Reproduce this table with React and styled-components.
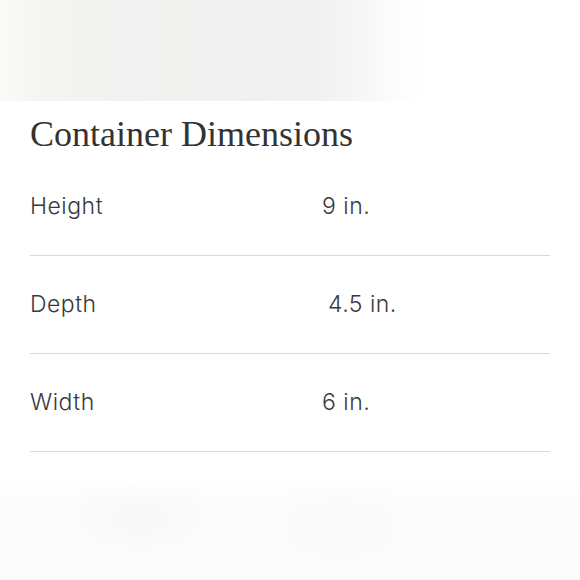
import React from "react";
import styled, { createGlobalStyle } from "styled-components";

const Global = createGlobalStyle`
  html, body { margin: 0; padding: 0; background: #ffffff; }
  body { width: 580px; height: 580px; overflow: hidden; }
`;

const Page = styled.div`
  width: 580px;
  height: 580px;
  display: flex;
  flex-direction: column;
  background: #ffffff;
`;

const TopPhoto = styled.div`
  height: 101px;
  flex: none;
  background: linear-gradient(
    90deg,
    #fafaf9 0%,
    #f4f4f3 8%,
    #f2f2f1 20%,
    #f0f0f0 45%,
    #f1f1f1 55%,
    #f7f7f6 63%,
    #fdfdfd 69%,
    #ffffff 74%
  );
`;

const Section = styled.section`
  padding: 0 30px;
  display: flex;
  flex-direction: column;
`;

const Heading = styled.h2`
  margin: 0;
  height: 57px;
  display: flex;
  align-items: flex-end;
  font-family: "Liberation Serif", "Times New Roman", serif;
  font-weight: 400;
  font-size: 36px;
  line-height: 1;
  color: #333333;
  padding-bottom: 6px;
  box-sizing: border-box;
`;

const Table = styled.div`
  display: flex;
  flex-direction: column;
`;

const Row = styled.div`
  height: 98px;
  box-sizing: border-box;
  display: grid;
  grid-template-columns: 292px 1fr;
  align-items: center;
  border-bottom: 1.5px solid #d9d9d9;
  font-family: Inter, Lato, sans-serif;
  font-weight: 300;
  font-size: 23px;
  letter-spacing: 0.5px;
  color: #3a3a3a;
  padding-bottom: 1px;
`;

const Label = styled.span``;

const Value = styled.span`
  padding-left: ${(p) => p.$indent || 0}px;
`;

const BottomPhoto = styled.div`
  margin-top: 26px;
  flex: 1;
  background:
    radial-gradient(ellipse 80px 40px at 140px 40px, #f7f7f6 0%, rgba(250,250,250,0) 100%),
    radial-gradient(ellipse 90px 50px at 340px 50px, #f9f9f8 0%, rgba(250,250,250,0) 100%),
    linear-gradient(180deg, #ffffff 0%, #fcfcfc 20%, #fcfcfc 100%);
`;

const rows = [
  { label: "Height", value: "9 in.", indent: 0 },
  { label: "Depth", value: "4.5 in.", indent: 6 },
  { label: "Width", value: "6 in.", indent: 0 },
];

export default function App() {
  return (
    <>
      <Global />
      <Page>
        <TopPhoto />
        <Section>
          <Heading>Container Dimensions</Heading>
          <Table>
            {rows.map((r) => (
              <Row key={r.label}>
                <Label>{r.label}</Label>
                <Value $indent={r.indent}>{r.value}</Value>
              </Row>
            ))}
          </Table>
        </Section>
        <BottomPhoto />
      </Page>
    </>
  );
}
